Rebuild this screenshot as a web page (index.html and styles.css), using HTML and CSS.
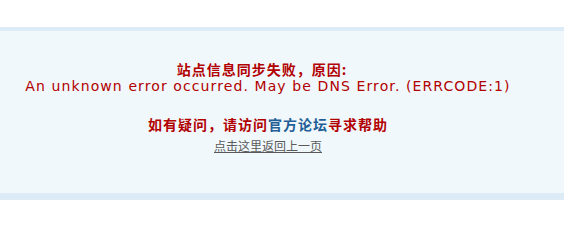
FILE: index.html
```html
<!DOCTYPE html>
<html>
<head>
<meta charset="utf-8">
<link rel="stylesheet" href="styles.css">
</head>
<body>
<div class="top"></div>
<div class="box">
  <div class="msg">
    <p class="title">站点信息同步失败，原因:</p>
    <p class="err">An unknown error occurred. May be DNS Error. (ERRCODE:1)</p>
  </div>
  <p class="help">如有疑问，请访问<a class="forum" href="#">官方论坛</a>寻求帮助</p>
  <p class="back"><a href="#">点击这里返回上一页</a></p>
</div>
</body>
</html>
```
FILE: styles.css
```css
html, body {
  margin: 0;
  padding: 0;
  background: #ffffff;
}
body {
  font-family: "DejaVu Sans", "Noto Sans CJK SC", sans-serif;
}
.top {
  height: 27px;
}
.box {
  background: #f0f8fc;
  border-top: 4px solid #dcebf6;
  border-bottom: 7px solid #dcebf6;
  padding: 30px 28px 39px 0;
  text-align: center;
}
.box p {
  margin: 0;
  height: 17px;
  overflow: visible;
}
.title {
  font-family: "Noto Sans CJK SC", sans-serif;
  font-size: 14px;
  font-weight: bold;
  letter-spacing: 1px;
  line-height: 17px;
  color: #b20000;
  padding-right: 12px;
}
.err {
  font-family: "DejaVu Sans", sans-serif;
  font-size: 14px;
  letter-spacing: 1.1px;
  line-height: 17px;
  color: #b20000;
}
.box .help {
  margin-top: 21px;
  font-family: "Noto Sans CJK SC", sans-serif;
  font-size: 14px;
  font-weight: bold;
  letter-spacing: 1px;
  line-height: 17px;
  color: #b20000;
}
.forum {
  color: #1f5f95;
  text-decoration: none;
}
.box .back {
  margin-top: 4px;
  font-family: "Noto Sans CJK SC", sans-serif;
  font-size: 12px;
  line-height: 17px;
}
.back a {
  color: #5a5a5a;
  text-decoration: underline;
}
```
